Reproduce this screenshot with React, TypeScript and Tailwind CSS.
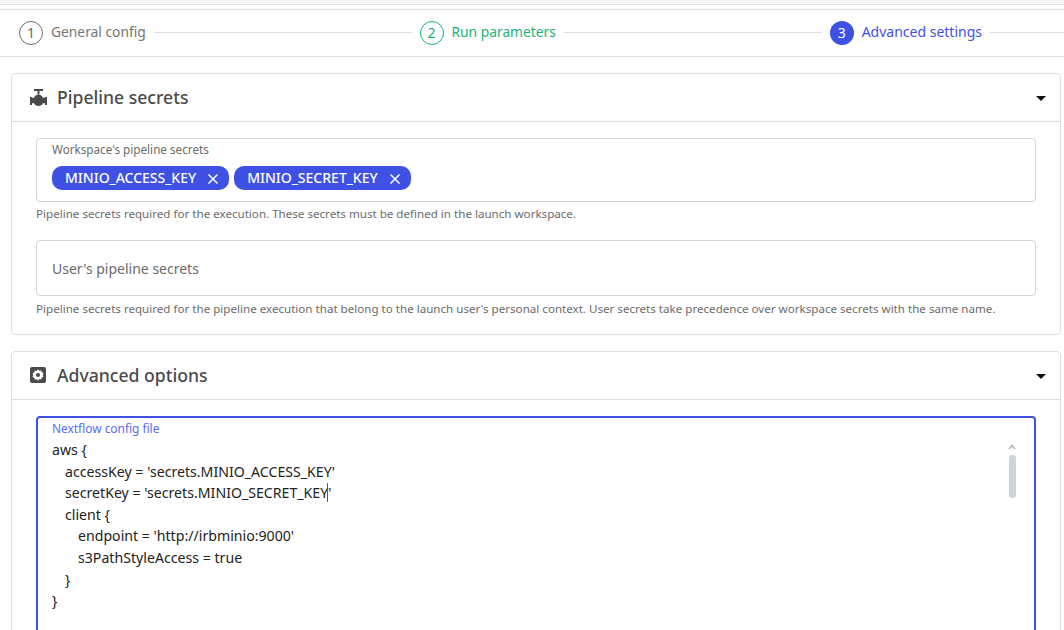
import type { ReactNode } from 'react'

const FONT = "font-['Noto_Sans',sans-serif]"

function Step({ n, label, state }: { n: number; label: string; state: 'idle' | 'done' | 'active' }) {
  const circle =
    state === 'active'
      ? 'bg-[#3f51e4] text-white'
      : state === 'done'
        ? 'border border-[#1bb27a] text-[#1bb27a]'
        : 'border border-[#6b6b6b] text-[#6b6b6b]'
  const text = state === 'active' ? 'text-[14px] text-[#3f51e4]' : state === 'done' ? 'text-[13.8px] text-[#1bb27a]' : 'text-[13.8px] text-[#757575]'
  return (
    <div className="flex items-center">
      <div className={`flex h-[24px] w-[24px] items-center justify-center rounded-full text-[14px] leading-none ${circle}`}>{n}</div>
      <span className={`ml-[8px] mb-[2px] leading-none ${text}`}>{label}</span>
    </div>
  )
}

function Line() {
  return <div className="mx-[8px] mb-[2px] h-px flex-1 bg-[#dedede]" />
}

function Caret() {
  return (
    <svg width="10" height="5" viewBox="0 0 10 5" className="mr-[14px] mt-[1px]">
      <path d="M0 0h10L5 5z" fill="#111" />
    </svg>
  )
}

function ValveIcon() {
  return (
    <svg width="17" height="17" viewBox="0 0 17 17" fill="#4a4a4a">
      <path d="M4 0h9v2H9.500v3.200h-2V2H4z" />
      <path d="M8.500 5.500c2.200 0 3.800 1.300 4.400 3.300h2.100V8h2v8h-2v-1.800h-2.100c-.6 1.700-2.300 2.800-4.400 2.800s-3.800-1.100-4.400-2.800H2V16H0V8h2v.8h2.100c.6-2 2.200-3.300 4.400-3.300z" />
    </svg>
  )
}

function OptionsIcon() {
  return (
    <svg width="16" height="16" viewBox="0 0 16 16">
      <rect width="16" height="16" rx="2" fill="#4a4a4a" />
      <path
        d="M8 2.200l1.300 1.500 1.900-.3.600 1.800 1.700.9-.7 1.800.7 1.800-1.700.9-.6 1.800-1.900-.3L8 13.800l-1.300-1.500-1.900.3-.6-1.800-1.700-.9.700-1.800-.7-1.800 1.700-.9.600-1.800 1.900.3z"
        fill="#fff"
      />
      <circle cx="8" cy="8" r="2" fill="#4a4a4a" />
    </svg>
  )
}

function Chip({ label }: { label: string }) {
  return (
    <span className="flex h-[24px] items-center rounded-[10px] bg-[#3f51e4] pb-[1px] pl-[13px] pr-[11px] text-[14px] font-medium text-white">
      {label}
      <svg width="10" height="10" viewBox="0 0 10 10" className="ml-[12px] mt-[2px]" stroke="#fff" strokeWidth="1.500">
        <path d="M0.500 0.500l9 9M9.500 0.500l-9 9" />
      </svg>
    </span>
  )
}

function Card({ icon, title, children }: { icon: ReactNode; title: string; children: ReactNode }) {
  return (
    <section className="ml-[11px] mr-[3px] rounded-[4px] border border-[#dedede] bg-white">
      <header className="flex h-[48px] items-center justify-between border-b border-[#dedede] pl-[18px]">
        <div className="flex items-center">
          <span className="flex w-[27px]">{icon}</span>
          <h2 className="text-[17.6px] font-medium text-[#4a4a4a]">{title}</h2>
        </div>
        <Caret />
      </header>
      {children}
    </section>
  )
}

export default function App() {
  return (
    <div className={`h-[630px] w-[1064px] overflow-hidden bg-white ${FONT}`}>
      <div className="h-[5px] border-b border-[#dcdfe3] bg-[#f4f5f7]" />
      <div className="mt-[4px] flex h-[48px] items-center border-y border-[#dedede] pl-[19px]">
        <Step n={1} label="General config" state="idle" />
        <Line />
        <Step n={2} label="Run parameters" state="done" />
        <Line />
        <Step n={3} label="Advanced settings" state="active" />
        <div className="mb-[2px] ml-[8px] h-px w-[74px] bg-[#dedede]" />
      </div>

      <div className="mt-[16px]">
        <Card icon={<ValveIcon />} title="Pipeline secrets">
          <div className="h-[212px] px-[24px] pt-[16px]">
            <div className="h-[64px] rounded-[4px] border border-[#d4d4d4] px-[15px] pt-[2px]">
              <div className="text-[11.7px] leading-[16px] text-[#6b6b6b]">Workspace's pipeline secrets</div>
              <div className="mt-[9px] flex gap-[5px]">
                <Chip label="MINIO_ACCESS_KEY" />
                <Chip label="MINIO_SECRET_KEY" />
              </div>
            </div>
            <p className="mt-[4px] text-[11.6px] leading-[16px] text-[#6b6b6b]">
              Pipeline secrets required for the execution. These secrets must be defined in the launch workspace.
            </p>
            <div className="mt-[18px] flex h-[56px] items-center rounded-[4px] border border-[#d4d4d4] px-[15px] text-[14px] text-[#6b6b6b]">
              User's pipeline secrets
            </div>
            <p className="mt-[5px] whitespace-nowrap text-[11.6px] leading-[16px] text-[#6b6b6b]">
              Pipeline secrets required for the pipeline execution that belong to the launch user's personal context. User secrets take precedence over workspace secrets with the same name.
            </p>
          </div>
        </Card>
      </div>

      <div className="mt-[16px]">
        <Card icon={<OptionsIcon />} title="Advanced options">
          <div className="px-[24px] pt-[16px]">
            <div className="relative h-[300px] rounded-[4px] border-2 border-[#3f51e4] pl-[14px] pt-[2px]">
              <div className="text-[11.9px] leading-[16px] text-[#5b6cf0]">Nextflow config file</div>
              <div className="mt-[3px] whitespace-pre text-[14.15px] leading-[21.6px] text-[#222]">
                <div>aws {'{'}</div>
                <div className="pl-[13px]">accessKey = 'secrets.MINIO_ACCESS_KEY'</div>
                <div className="pl-[13px]">secretKey = 'secrets.MINIO_SECRET_KEY<span className="ml-[-1px] border-l border-[#3f51e4]">'</span></div>
                <div className="pl-[13px]">client {'{'}</div>
                <div className="pl-[26px]">endpoint = 'http://irbminio:9000'</div>
                <div className="pl-[26px]">s3PathStyleAccess = true</div>
                <div className="pl-[13px]">{'}'}</div>
                <div>{'}'}</div>
              </div>
              <svg width="8" height="6" viewBox="0 0 8 6" className="absolute right-[18px] top-[26px]" fill="none" stroke="#b5b5b5" strokeWidth="1.500">
                <path d="M1 5l3-3.500L7 5" />
              </svg>
              <div className="absolute right-[18px] top-[37px] h-[43px] w-[7px] rounded-[3px] bg-[#cdd6e0]" />
            </div>
          </div>
        </Card>
      </div>
    </div>
  )
}
